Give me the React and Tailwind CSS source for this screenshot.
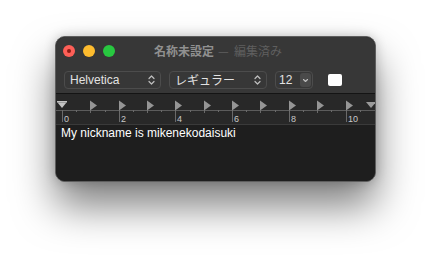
import React from "react";

const UNIT = 28.35;
const ORIGIN = 6;

function Ruler() {
  const ticks = [];
  for (let k = 0; k <= 22; k++) {
    const x = Math.round(ORIGIN + k * (UNIT / 2)) + 0.5;
    if (x > 318) break;
    let h;
    if (k % 4 === 0) h = 12;
    else if (k % 2 === 0) h = 3;
    else h = 2;
    ticks.push(<line key={"t" + k} x1={x} y1={16} x2={x} y2={16 + h} stroke="#6a6a6a" strokeWidth="1" />);
  }
  const labels = [0, 2, 4, 6, 8, 10].map((n) => {
    const x = Math.round(ORIGIN + n * UNIT) + 2;
    return (
      <text key={"l" + n} x={x} y={28} fill="#c8c8c8" fontSize="9" fontFamily="'Liberation Sans', Arial, sans-serif">
        {n}
      </text>
    );
  });
  const tabs = [];
  for (let n = 1; n <= 10; n++) {
    const x = Math.round(ORIGIN + n * UNIT);
    tabs.push(<polygon key={"tab" + n} points={`${x},6.5 ${x + 7},11.5 ${x},16.5`} fill="#959595" />);
  }
  return (
    <svg width="319" height="30" viewBox="0 0 319 30" className="block">
      <line x1="0" y1="16.5" x2="319" y2="16.5" stroke="#5c5c5c" strokeWidth="1" />
      {ticks}
      {labels}
      {tabs}
      <rect x="1" y="7" width="10" height="1.5" fill="#c4c4c4" />
      <polygon points="1.5,8.5 10.5,8.5 6,14" fill="#c4c4c4" />
      <polygon points="310,8 320,8 315,14" fill="#9a9a9a" />
    </svg>
  );
}

function UpDown() {
  return (
    <svg width="7" height="10" viewBox="0 0 7 10">
      <polyline points="1,3.5 3.5,1 6,3.5" fill="none" stroke="#bfbfbf" strokeWidth="1.2" strokeLinecap="round" strokeLinejoin="round" />
      <polyline points="1,6.5 3.5,9 6,6.5" fill="none" stroke="#bfbfbf" strokeWidth="1.2" strokeLinecap="round" strokeLinejoin="round" />
    </svg>
  );
}

export default function App() {
  const sans = "font-['Liberation_Sans','Noto_Sans_CJK_JP',Arial,sans-serif]";
  return (
    <div className={`w-[431px] h-[255px] bg-white pt-[36px] pl-[55px] ${sans}`}>
      <div className="w-[321px] h-[146px] rounded-[10px] border border-[#5e5e5e] bg-[#1e1e1e] overflow-hidden flex flex-col shadow-[0_24px_40px_rgba(0,0,0,0.5),0_0_12px_rgba(0,0,0,0.2)]">
        <div className="bg-[#373737] flex flex-col">
          <div className="h-[27px] flex items-center relative">
            <div className="flex items-center gap-[8px] pl-[7px]">
              <div className="w-[12px] h-[12px] rounded-full bg-[#fe5f57] flex items-center justify-center">
                <div className="w-[4px] h-[4px] rounded-full bg-[#8c1b14]" />
              </div>
              <div className="w-[12px] h-[12px] rounded-full bg-[#febc2e]" />
              <div className="w-[12px] h-[12px] rounded-full bg-[#28c840]" />
            </div>
            <div className="absolute inset-0 flex items-center justify-center pl-[5px] text-[12px] leading-none font-['Noto_Sans_CJK_JP',sans-serif]">
              <span className="text-[#909090] font-bold">名称未設定</span>
              <span className="text-[#5f5f5f] ml-[4px]">—&nbsp;&nbsp;編集済み</span>
            </div>
          </div>
          <div className="h-[29px] flex items-start pt-[7px] pl-[8px] text-[12px] text-[#e2e2e2] leading-none">
            <div className="w-[97px] h-[18px] rounded-[4px] border border-[#4c4c4c] flex items-center justify-between pl-[5px] pr-[5px]">
              <span>Helvetica</span>
              <UpDown />
            </div>
            <div className="w-[98px] h-[18px] ml-[8px] rounded-[4px] border border-[#4c4c4c] flex items-center justify-between pl-[5px] pr-[5px] font-['Noto_Sans_CJK_JP',sans-serif] text-[12px]">
              <span>レギュラー</span>
              <UpDown />
            </div>
            <div className="w-[38px] h-[18px] ml-[8px] rounded-[4px] border border-[#4c4c4c] flex items-center justify-between pl-[3px] pr-[1px]">
              <span>12</span>
              <div className="w-[11px] h-[14px] rounded-[3px] bg-[#4a4a4a] flex items-center justify-center">
                <svg width="7" height="5" viewBox="0 0 7 5">
                  <polyline points="1.5,1.5 3.5,3.5 5.5,1.5" fill="none" stroke="#bdbdbd" strokeWidth="1.1" strokeLinecap="round" strokeLinejoin="round" />
                </svg>
              </div>
            </div>
            <div className="w-[14px] h-[12px] ml-[15px] mt-[3px] rounded-[2px] bg-white" />
          </div>
        </div>
        <div className="h-[1px] bg-[#141414]" />
        <div className="bg-[#282828] h-[30px]">
          <Ruler />
        </div>
        <div className="h-[1px] bg-[#3a3a3a]" />
        <div className="flex-1 bg-[#1e1e1e] pl-[5px] pt-[1px] text-[12px] leading-[15px] text-white">
          My nickname is mikenekodaisuki
        </div>
      </div>
    </div>
  );
}
